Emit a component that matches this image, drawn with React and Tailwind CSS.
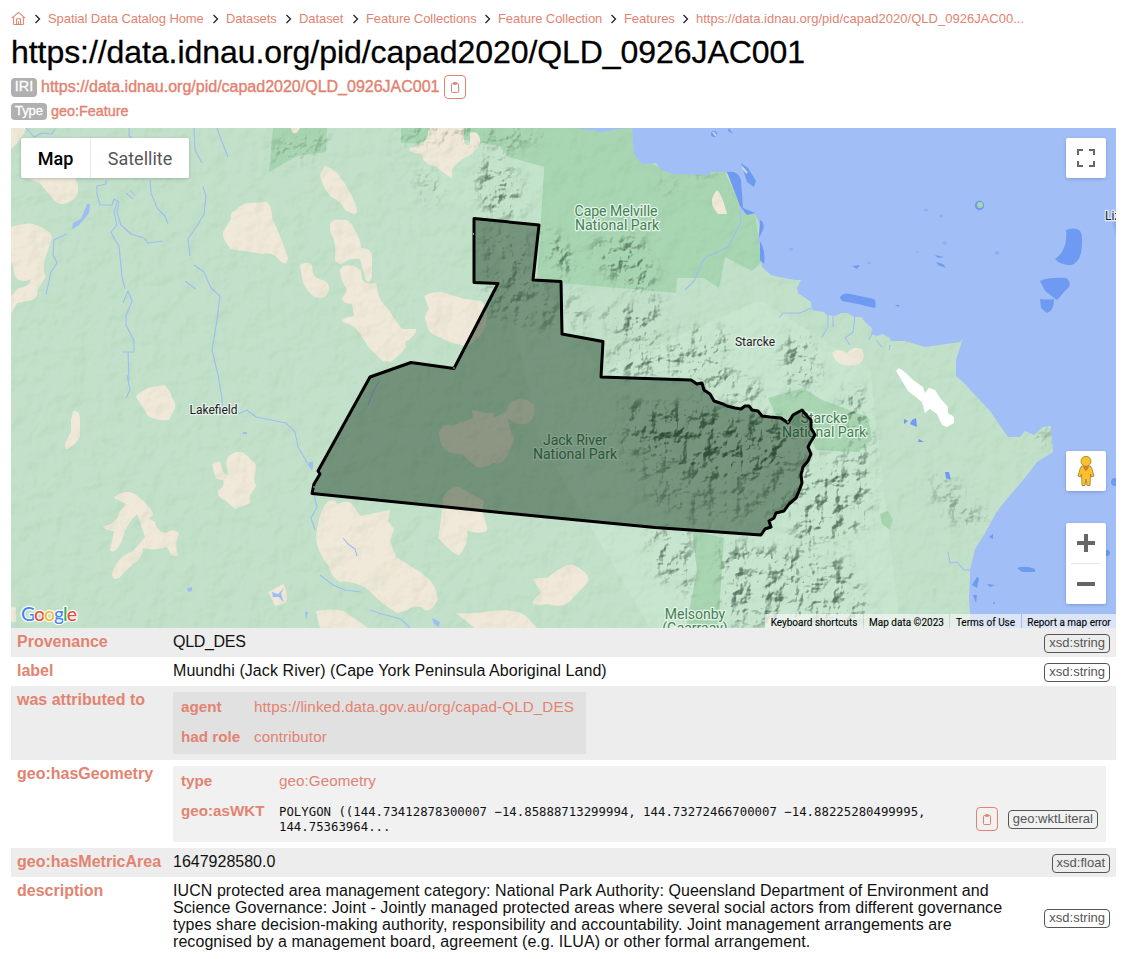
import React from "react";

const crumbs = [
  ["Spatial Data Catalog Home", "w-[156px]"],
  ["Datasets", "w-[51px]"],
  ["Dataset", "w-[45px]"],
  ["Feature Collections", "w-[110px]"],
  ["Feature Collection", "w-[104px]"],
  ["Features", "w-[50px]"],
  ["https://data.idnau.org/pid/capad2020/QLD_0926JAC00...", "w-[330px] tracking-[0.013px]"],
];

const SAND = [
  "M11 128H26Q22 140 11 149Z",
  "M26 168L74 176Q79 185 78 192Q76 200 67 203Q60 206 55 201Q45 190 40 183L27 178Z",
  "M11 227Q30 221 36 225Q52 231 52 238L44 262Q43 272 46 277L38 289Q38 299 32 300L17 303L11 314V296L19 288Q31 286 31 279Q20 284 15 276L11 261Z",
  "M231 219Q230 211 236 210Q243 202 250 203L267 202Q272 206 272 218Q280 234 288 258Q287 267 280 261Q273 251 262 254L231 249Q222 240 223 232Z",
  "M325 166Q333 168 338 174Q350 190 354 201Q360 213 354 214L345 210Q342 202 330 196Q321 184 320 175Z",
  "M330 224Q334 218 340 220Q350 218 353 227Q361 240 361 248Q372 248 372 257L372 277Q369 285 366 280Q363 270 360 259Q350 258 345 262Q337 267 335 259Q336 247 334 240Q329 231 330 224Z",
  "M300 265Q308 260 312 265Q312 277 319 279Q330 281 329 290Q327 299 319 298Q311 298 303 283Z",
  "M343 266Q354 263 361 271L362 280Q367 285 376 283L378 293Q379 300 389 310Q396 322 402 329L416 329Q417 335 405 342Q407 348 403 351L391 362L383 361L370 349L358 331Q355 325 342 322Q342 317 354 316L352 304Q341 303 342 298L347 290Q340 280 340 270Z",
  "M431 128H464V140Q466 147 470 144V133Q477 130 480 138Q482 146 470 155Q454 163 452 170L452 179L435 166Q422 164 422 154Q408 153 410 148L421 145Q430 137 428 131Z",
  "M424 296Q430 292 442 292L464 299L482 301Q489 313 486 325Q479 341 467 346L452 343L437 336Q428 334 427 324Q422 317 429 309Z",
  "M717 190Q722 194 727 214H718Q709 204 713 196Z",
  "M136 397Q141 387 165 385Q171 392 172 398Q176 402 175 408L169 420Q156 421 148 416Z",
  "M73 411Q79 409 80 418V436Q77 444 67 449Q61 449 71 432V420Z",
  "M228 457Q236 449 244 453L255 463Q257 468 254 479L256 486L250 495Q251 505 248 504L235 509L226 501Q217 497 218 491Q225 487 223 480L216 479L212 464Q217 460 221 463Q222 475 228 475Q227 466 226 463Z",
  "M114 498Q118 491 130 492Q138 494 150 508Q157 516 148 518L155 522Q157 533 166 533Q175 527 179 534Q174 543 178 555Q172 559 167 547Q158 551 143 548Q142 559 133 564L119 578Q112 581 112 573Q117 557 133 551L145 537L137 514Q125 525 122 541Q114 556 110 550L114 531Q103 530 103 526Q116 525 120 511L126 504Z",
  "M328 501Q337 499 337 504Q348 499 352 504L360 516L390 510L388 521L394 529L390 541L396 557L420 572Q439 585 437 601Q429 616 421 607Q411 605 408 610L397 613L382 603L366 588Q350 580 340 582Q330 576 329 567Q317 551 316 538Q319 509 328 501Z",
  "M443 497Q453 483 461 488L484 501L482 511L487 527Q489 536 467 531Q470 539 460 555Q453 554 448 548L438 538L441 520Z",
  "M439 432Q444 422 451 426L473 418L472 410L478 411Q485 414 494 413L493 418L506 412Q508 401 519 399Q525 397 534 405Q536 419 528 423Q517 427 508 418Q508 426 514 440L506 458Q502 465 493 463Q479 471 474 465L462 454Q442 454 440 440Z",
  "M533 579Q542 577 547 578Q567 562 574 565Q592 575 588 582L572 599Q565 609 547 604Q536 607 532 602L541 592Z",
  "M456 613Q468 614 486 612Q516 607 527 617L537 628H475Z",
  "M316 611Q340 607 348 614L368 628H320Z",
  "M268 592L283 584Q289 594 286 603L275 606Z",
  "M11 607H16V622H11Z",
  "M832 353Q838 347 847 353Q853 346 862 349Q867 358 859 364Q852 367 844 365Q834 362 832 353Z",
  "M291 128H300Q296 136 292 132Z",
];

const REEFS = [
  "M729 128L733 134L728 131Z", "M741 163L748 168L756 181L754 187L747 182Z",
  "M727 172Q738 170 741 180L743 208L755 213L747 215L740 206Z",
  "M760 220Q765 222 763 230L759 238Z", "M760 241Q766 252 764 264L760 260Z",
  "M852 266L860 265L857 269Z", "M840 298Q842 292 850 294L874 299Q877 303 875 308L858 304L842 301Z",
  "M1066 230Q1082 225 1082 238Q1083 262 1071 265Q1060 265 1055 259Q1068 250 1066 230Z",
  "M1040 281Q1048 277 1066 278Q1074 284 1065 291L1057 300L1045 291Z",
  "M1040 299Q1048 300 1054 299Q1054 311 1047 313L1041 308Z",
  "M935 255L944 257L938 258Z", "M936 262L943 264L946 268L938 265Z", "M895 305H900L898 307Z",
  "M1017 568Q1025 565 1035 569V572L1022 572Z", "M972 585L977 577L979 578L977 588Z", "M987 584L995 585L990 587Z", "M973 595L977 595L976 603Z",
  "M989 537L993 534V539Z", "M993 602L996 603L993 604Z",
  "M904 419L908 421L904 424Z", "M912 420L916 418L917 427L910 424Z", "M919 439L924 442L918 442Z", "M945 472L949 472L951 480L946 478Z",
];

const RIVERS = [
  "M26 128L34 137L42 133L52 134L55 129", "M129 128V136L133 139",
  "M106 180V184L97 186V194L100 205H112L114 199L119 202L117 213L121 225L131 234L144 238L148 243L163 241",
  "M117 203L114 212L117 225L111 232L115 240L119 246L122 277L125 289", "M150 180L151 193L157 208L165 216L168 224",
  "M203 187L206 196L204 214L197 226L188 239L190 256", "M194 128L195 150L202 163", "M217 128L222 142L228 157",
  "M194 265L204 272L211 288L220 296L217 320L212 350L218 375L222 398L222 409L238 414L247 410L256 417L286 423L295 432L298 447L305 459L312 470",
  "M67 234L54 240L53 255L57 263L51 272L46 295", "M185 281L196 289",
  "M123 303L128 291L132 301L126 316V325L134 341V352H122", "M128 352L129 381", "M127 375L130 390L126 398",
  "M314 495L317 507L311 518L315 530", "M320 575L333 585L345 590L361 592", "M343 538L348 544L355 549L357 556",
  "M740 210L741 222L728 247L706 257L703 261L694 281L685 290", "M811 308L800 313L783 313L779 318",
  "M828 315V327L822 337", "M833 315V327", "M855 315L853 332L845 338L850 345", "M873 332L869 340", "M876 340L882 347", "M890 345L889 350",
  "M948 552L950 563L957 562L964 570L970 570", "M370 610L382 614L401 619L410 628",
  "M380 380L374 390L368 405", "M130 190L135 196M126 193L133 199",
];

const COAST =
  "M574 128L590 130L602 132L619 129L632 128L634 154L642 164L647 164L656 163L660 169L672 174L709 175L711 172H725L735 180L741 193L740 209L745 214L755 214L760 225L758 238L761 252L762 267L771 275L779 277L795 280L801 280L797 288L798 293L811 302L812 310L824 312L827 315L836 316L841 313L848 313L854 317L861 317L866 323L872 328L871 334L877 336L882 334L890 338L891 341L905 341L915 344L925 347L960 342L963 338L956 360L956 376L964 383L972 392L980 400L990 411L1001 427L1008 437L1020 437L1025 431L1034 435L1043 427L1051 426L1053 452L1037 462L1024 479L1006 500L996 513L984 535L975 549L970 570V576L969 600L970 614L971 628H1116V128Z";

const BOUNDARY =
  "M474 218.500L539 225L533 280L561 281.500L562 334L603 341.500L601 377L691 380L697 384L702 383L704 390L710 394L714 401L723 404L727 406L735 408L741 409L745 406H749L752 410L758 411L762 416L770 417L781 418L788 423L793 415L802 410L807 416L811 420V428L815 435L810 443L808 447L811 454L808 461L803 467L801 475L802 483L799 491L796 498L789 504L784 511L776 513L774 518L769 521L771 527L765 529L761 535L655 527.500L536 516L312 493.500L314 484L320 474L318 471L370 377L411 362.500L454 368.500L498 283.500L474 282.500Z";

const FAINT_RIDGES = [
  "M401 128H545V135L510 150L475 140L401 143Z", "M415 175L435 172L440 200L428 205Z", "M390 145L405 165L403 168Z", "M690 140H715V175H690Z",
  "M660 180L672 178V195H662Z", "M273 145L325 130V150L275 165Z", "M925 595L940 580L930 600Z", "M1024 432L1050 425L1052 450L1040 440Z",
  "M950 480L990 520L960 530L920 480Z", "M610 430L690 400L800 430L790 510L700 525L650 500Z", "M480 230L530 235L525 275L560 300L555 330L490 320Z",
].join("");

const STRONG_RIDGES = [
  "M480 165L500 150L520 185L522 215L490 218L478 190Z", "M545 225L570 250L580 270L560 275L545 255Z", "M590 245L640 235L655 270L650 295L620 285L600 265Z",
  "M568 290L580 300L590 330L575 325Z", "M600 310L650 305L660 290V340L620 340Z", "M610 350L690 345L730 370L760 385L765 405L715 395L690 375H610Z",
  "M680 325L720 330L735 345L715 360L690 340Z", "M780 340L810 335L820 380L790 395Z", "M840 395L862 385L865 420L875 445L855 455Z",
  "M620 400L790 420L790 470L700 480L640 440Z", "M800 460L870 455V520L840 540L790 550Z", "M650 530L690 530V600L655 570Z", "M720 540L850 560L870 620L725 625Z",
].join("");

function MapLabel({ x, y, anchor = "middle", fill = "#3f8154", halo = "#e6f3e8", size = 14, children }) {
  return (
    <text x={x} y={y} textAnchor={anchor} fontSize={size} fill={fill} stroke={halo} strokeWidth="2.500" strokeLinejoin="round" paintOrder="stroke" fontFamily="Roboto, sans-serif">
      {children}
    </text>
  );
}

function Terrain() {
  return (
    <svg viewBox="11 128 1105 500" width="1105" height="500" className="block">
      <defs>
        <filter id="ridge" filterUnits="userSpaceOnUse" x="11" y="128" width="1105" height="500" colorInterpolationFilters="sRGB">
          <feGaussianBlur in="SourceAlpha" stdDeviation="7" result="area" />
          <feTurbulence type="fractalNoise" baseFrequency="0.062" numOctaves="4" seed="23" result="noise" />
          <feDiffuseLighting in="noise" surfaceScale="9" lightingColor="#fff" result="lit">
            <feDistantLight azimuth="225" elevation="50" />
          </feDiffuseLighting>
          <feColorMatrix in="lit" type="matrix" values="0 0 0 0 0.270  0 0 0 0 0.380  0 0 0 0 0.310  -1.300 0 0 0 0.820" result="shade" />
          <feComposite in="shade" in2="area" operator="in" />
        </filter>
        <filter id="plain" filterUnits="userSpaceOnUse" x="11" y="128" width="1105" height="500" colorInterpolationFilters="sRGB">
          <feTurbulence type="fractalNoise" baseFrequency="0.050" numOctaves="3" seed="4" result="noise" />
          <feDiffuseLighting in="noise" surfaceScale="2.500" lightingColor="#fff" result="lit">
            <feDistantLight azimuth="225" elevation="50" />
          </feDiffuseLighting>
          <feColorMatrix in="lit" type="matrix" values="0 0 0 0 0.300  0 0 0 0 0.520  0 0 0 0 0.380  -0.500 0 0 0 0.400" />
        </filter>
      </defs>
      <rect x="11" y="128" width="1105" height="500" fill="#c3e1ca" />
      <path d="M470 128H560L540 280L600 370L760 300L870 370L900 628H650L540 440Z" fill="#c8e6cf" />
      <g fill="#a9d6b2">
        <path d="M273 128H327L326 152L297 156L269 172Z" />
        <path d="M401 128H632L636 155L672 174L725 172L741 207L755 214L762 262L752 271L725 257L719 288L704 278H677L676 293L561 283L537 279L544 167L508 157L495 146L401 143Z" />
        <path d="M768 398L803 388L822 400L868 417L872 440L858 452L816 450L806 430L778 420Z" />
        <path d="M692 530L724 538L718 628H686L697 570Z" />
        <path d="M880 514L888 511L893 520L890 530L882 524Z" />
      </g>
      <path d="M420 143L435 135L500 146L508 157L544 167L540 225L474 218L420 180Z" fill="#c4e3cb" />
      <g fill="#f0e8d8">{SAND.map((d) => <path key={d} d={d} />)}</g>
      <rect x="11" y="128" width="1105" height="500" opacity=".55" filter="url(#plain)" />
      <path d={FAINT_RIDGES} opacity=".6" filter="url(#ridge)" />
      <path d={STRONG_RIDGES} filter="url(#ridge)" />
      <g fill="none" stroke="#9dbdf4" strokeWidth="1.100" strokeLinejoin="round">
        {RIVERS.map((d) => <path key={d} d={d} />)}
      </g>
      <g fill="#9dbdf4">
        <path d="M87 204H90L89 213L79 225L72 229L73 223L81 219Z" />
        <path d="M309 462H313V469L309 466ZM187 588L192 587V591L188 592ZM272 592L278 594L284 588L281 594L284 603L279 597H273ZM432 618L440 622L439 627L434 624ZM305 612H308L306 620ZM243 432H247V434H243Z" />
      </g>
      <path d={COAST} fill="#a2bef7" />
      <g fill="#6e9af1">{REEFS.map((d) => <path key={d} d={d} />)}
        <circle cx="979.500" cy="205.500" r="4.700" /><circle cx="1115" cy="482" r="4" /><circle cx="1107" cy="553" r="3" /><circle cx="714" cy="134" r="3" />
      </g>
      <g fill="#8fb0f4">
        <ellipse cx="926" cy="210" rx="2.500" ry="1.500" /><ellipse cx="941" cy="216" rx="2" ry="1.500" /><ellipse cx="997" cy="253" rx="2.500" ry="2" /><ellipse cx="945" cy="243" rx="2.500" ry="1.500" /><ellipse cx="791" cy="249" rx="2" ry="1.500" /><ellipse cx="869" cy="263" rx="2" ry="1" /><ellipse cx="917" cy="252" rx="1.500" ry="1" /><path d="M1112 222H1116V236Z" />
      </g>
      <path d="M742 167L747 173M713 132L716 136" stroke="#c3e1ca" strokeWidth="2" />
      <circle cx="980" cy="205" r="3" fill="#a9d6b2" />
      <path d="M896 371L899 368L906 373L913 380L923 387L925 393L929 388L935 390L940 398L948 407V413L954 417V423L947 427L942 425L937 414L930 409L925 413L922 402L908 391Z" fill="#fff" />
      <MapLabel x="616" y="216">Cape Melville</MapLabel>
      <MapLabel x="617" y="230">National Park</MapLabel>
      <MapLabel x="575" y="445">Jack River</MapLabel>
      <MapLabel x="575" y="459">National Park</MapLabel>
      <MapLabel x="824" y="423">Starcke</MapLabel>
      <MapLabel x="824" y="437">National Park</MapLabel>
      <MapLabel x="695" y="619">Melsonby</MapLabel>
      <MapLabel x="695" y="633">(Gaarraay)</MapLabel>
      <MapLabel x="213.500" y="414" size="12" fill="#222" halo="#e3f1e6">Lakefield</MapLabel>
      <MapLabel x="755" y="346" size="12" fill="#222" halo="#e3f1e6">Starcke</MapLabel>
      <MapLabel x="1105" y="220" anchor="start" size="12" fill="#222" halo="#e3ebfa">Liz</MapLabel>
      <path d={BOUNDARY} fill="#012109" fillOpacity=".41" stroke="#000" strokeWidth="3" strokeLinejoin="round" />
      <g fill="#fff"><circle cx="473.500" cy="234" r=".7" /><circle cx="454" cy="368" r=".7" /><circle cx="788" cy="422" r=".7" /><circle cx="314" cy="487" r=".7" /></g>
      <text x="21" y="621" fontFamily="Lato, sans-serif" fontSize="19.500" fontWeight="500" stroke="#fff" strokeWidth="2.400" paintOrder="stroke" strokeLinejoin="round" textLength="56">
        <tspan fill="#4285f4">G</tspan><tspan fill="#ea4c3b">o</tspan><tspan fill="#f6b91e">o</tspan><tspan fill="#4285f4">g</tspan><tspan fill="#34a853">l</tspan><tspan fill="#ea4c3b">e</tspan>
      </text>
    </svg>
  );
}

const Clipboard = () => (
  <svg viewBox="0 0 10 12" className="h-3 w-[10px]" fill="none" stroke="#e28371">
    <rect x="1.500" y="2.500" width="7" height="9" rx=".8" />
    <path d="M3.500 1.500H6.500V3.500H3.500Z" fill="#e28371" fillOpacity=".4" strokeWidth=".8" />
  </svg>
);

const CopyButton = () => (
  <button className="flex h-6 w-[22px] items-center justify-center rounded-[4px] border border-[#e28371]"><Clipboard /></button>
);

const Tag = ({ children }) => (
  <span className="flex h-[19px] shrink-0 items-center rounded-[4px] border border-[#555] px-1 text-[13px] leading-none whitespace-nowrap text-[#555]"><span className="-mt-0.5">{children}</span></span>
);

const Row = ({ label, shade, className, children, tag }) => (
  <div className={`flex ${shade ? "bg-[#ededed]" : "bg-white"} ${className}`}>
    <div className="w-[162px] shrink-0 pt-1 pl-1.5 font-bold whitespace-nowrap text-[#e28371]"><span>{label}</span></div>
    {children}
    {tag && <div className="mr-1.5 ml-auto flex items-center pt-px"><Tag>{tag}</Tag></div>}
  </div>
);

const Value = ({ children }) => <div className="pt-1 tracking-[0.072px] whitespace-nowrap">{children}</div>;

const Footer = ({ children, className }) => (
  <span className={`flex h-[14px] items-center justify-center bg-[#f5f5f5]/70 pt-[2px] ${className}`}>{children}</span>
);

export default function App() {
  return (
    <main className="h-[959px] w-[1124px] overflow-hidden bg-white pl-[11px] font-['Liberation_Sans',Arial,sans-serif] text-base leading-[19px] text-[#111]">
      <nav className="flex h-[34px] items-center pt-[3px] text-[13px] tracking-[-0.07px] text-[#e28371]">
        <svg viewBox="0 0 16 16" className="h-[15px] w-[15px]" fill="none" stroke="#e28371" strokeWidth="1.100" strokeLinejoin="round">
          <path d="M1 7.500L8 1.500L15 7.500M2.800 6.200V13.500Q2.800 14.500 3.800 14.500H12.200Q13.200 14.500 13.200 13.500V6.200" />
          <path d="M5.800 14.500V9Q5.800 8.300 6.500 8.300H9.500Q10.200 8.300 10.200 9V14.500M8 11V14" />
        </svg>
        {crumbs.map(([text, width]) => (
          <React.Fragment key={text}>
            <svg viewBox="0 0 22 12" className="h-3 w-[22px]" fill="none" stroke="#222" strokeWidth="1.300"><path d="M9.500 2L13.500 6L9.500 10" /></svg>
            <span className={`whitespace-nowrap ${width}`}>{text}</span>
          </React.Fragment>
        ))}
      </nav>
      <h1 className="h-[40px] text-[32px] leading-[37px] tracking-[-0.059px] whitespace-nowrap text-black [-webkit-text-stroke:0.3px_#000]">https://data.idnau.org/pid/capad2020/QLD_0926JAC001</h1>
      <div className="flex h-[26px] items-center text-[#e28371]">
        <span className="flex h-[19px] w-[26px] items-center justify-center rounded-[4px] bg-[#b0b0b0] pb-px text-[14.500px] text-white [-webkit-text-stroke:0.3px_#fff]">IRI</span>
        <span className="ml-1 w-[403px] pb-[2px] [-webkit-text-stroke:0.4px_#e28371]">https://data.idnau.org/pid/capad2020/QLD_0926JAC001</span>
        <CopyButton />
      </div>
      <div className="flex h-[28px] pt-[3px] text-[14.400px] text-[#e28371]">
        <span className="flex h-[17px] w-[36px] items-center justify-center rounded-[4px] bg-[#b0b0b0] pb-[2px] text-[13px] tracking-[-0.1px] text-white [-webkit-text-stroke:0.3px_#fff]">Type</span>
        <span className="ml-1 leading-[17px] [-webkit-text-stroke:0.4px_#e28371]">geo:Feature</span>
      </div>

      <section className="relative h-[500px] w-[1105px] overflow-hidden font-['Roboto',sans-serif]">
        <Terrain />
        <div className="absolute top-[10px] left-[10px] flex h-10 w-[168px] rounded-[2px] bg-white text-[18px] shadow-[0_1px_4px_-1px_rgba(0,0,0,.3)]">
          <span className="flex w-[70px] items-center justify-center border-r border-[#e8e8e8] font-medium text-black">Map</span>
          <span className="flex flex-1 items-center justify-center text-[#565656]">Satellite</span>
        </div>
        <div className="absolute top-[10px] right-[10px] flex h-10 w-10 items-center justify-center rounded-[2px] bg-white shadow-[0_1px_4px_-1px_rgba(0,0,0,.3)]">
          <svg viewBox="0 0 18 18" className="h-[18px] w-[18px]" fill="none" stroke="#666" strokeWidth="2"><path d="M1 6V1H6M12 1H17V6M17 12V17H12M6 17H1V12" /></svg>
        </div>
        <div className="absolute top-[323px] right-[10px] flex h-10 w-10 items-center justify-center rounded-[2px] bg-white shadow-[0_1px_4px_-1px_rgba(0,0,0,.3)]">
          <svg viewBox="0 0 18 30" className="h-[30px] w-[18px]" fill="#fbc02d" stroke="#9a7b35" strokeWidth=".8">
            <path d="M4.500 10H13.500L15 13L17 20L14.500 21L13.500 18L13 29.500H10L9 23L8 29.500H5L4.500 18L3.500 21L1 20L3 13Z" />
            <path d="M6 11H12L9 15.500Z" fill="#e0762c" stroke="none" /><circle cx="9" cy="5.300" r="5" />
          </svg>
        </div>
        <div className="absolute top-[395px] right-[10px] flex h-[81px] w-10 flex-col items-center rounded-[2px] bg-white shadow-[0_1px_4px_-1px_rgba(0,0,0,.3)]">
          <svg viewBox="0 0 40 40" className="h-10 w-10"><path d="M11 20H29M20 11V29" stroke="#666" strokeWidth="4" /></svg>
          <span className="h-px w-[30px] bg-[#e6e6e6]" />
          <svg viewBox="0 0 40 40" className="h-10 w-10"><path d="M11 20H29" stroke="#666" strokeWidth="4" /></svg>
        </div>
        <div className="absolute right-0 bottom-0 flex gap-px text-[10px] whitespace-nowrap text-black [-webkit-text-stroke:0.1px_#000]">
          <Footer className="w-[98px]">Keyboard shortcuts</Footer>
          <Footer className="w-[85px]">Map data ©2023</Footer>
          <Footer className="w-[71px]">Terms of Use</Footer>
          <Footer className="w-[94px]">Report a map error</Footer>
        </div>
      </section>

      <section className="w-[1105px]">
        <Row label="Provenance" shade className="h-[29px]" tag="xsd:string"><Value><span className="tracking-[-0.3px]">QLD_DES</span></Value></Row>
        <Row label="label" className="h-[29px]" tag="xsd:string"><Value>Muundhi (Jack River) (Cape York Peninsula Aboriginal Land)</Value></Row>
        <Row label="was attributed to" shade className="h-[74px]">
          <div className="mt-1.5 h-[62px] w-[413px] bg-[#e1e1e1] pl-2 text-[15.200px] text-[#e28371]">
            <div className="flex h-[30px] items-center pb-[2px]"><b className="w-[73px]">agent</b><span className="tracking-[0.1px]">https://linked.data.gov.au/org/capad-QLD_DES</span></div>
            <div className="flex h-[30px] items-center pb-[2px]"><b className="w-[73px]">had role</b><span className="tracking-[0.1px]">contributor</span></div>
          </div>
        </Row>
        <Row label="geo:hasGeometry" className="h-[88px]">
          <div className="mt-1.5 h-[76px] w-[933px] bg-[#f1f1f1] pl-2 text-[15.200px] text-[#e28371]">
            <div className="flex h-[30px] items-center pb-[2px]"><b className="w-[98px]">type</b><span className="tracking-[0.06px]">geo:Geometry</span></div>
            <div className="flex h-[46px]">
              <b className="w-[98px] pt-[5px]">geo:asWKT</b>
              <code className="w-[697px] pt-[9px] font-['DejaVu_Sans_Mono',monospace] text-[12.350px] leading-[15px] text-[#111]">POLYGON ((144.73412878300007 −14.85888713299994, 144.73272466700007 −14.88225280499995,<br />144.75363964...</code>
              <div className="mr-2 ml-auto flex items-center gap-2.5"><CopyButton /><Tag>geo:wktLiteral</Tag></div>
            </div>
          </div>
        </Row>
        <Row label="geo:hasMetricArea" shade className="h-[29px]" tag="xsd:float"><Value><span className="tracking-normal">1647928580.0</span></Value></Row>
        <Row label="description" className="h-[82px]" tag="xsd:string">
          <div className="pt-[5px] leading-[17px] tracking-[0.068px] whitespace-nowrap">
            IUCN protected area management category: National Park Authority: Queensland Department of Environment and<br />
            Science Governance: Joint - Jointly managed protected areas where several social actors from different governance<br />
            types share decision-making authority, responsibility and accountability. Joint management arrangements are<br />
            recognised by a management board, agreement (e.g. ILUA) or other formal arrangement.
          </div>
        </Row>
      </section>
    </main>
  );
}
